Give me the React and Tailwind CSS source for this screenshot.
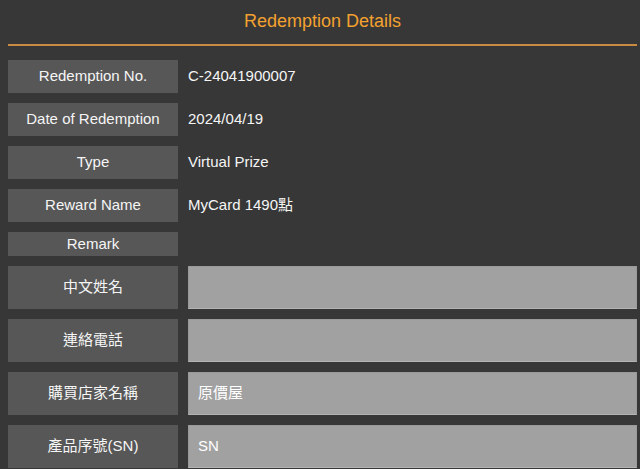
import React from 'react'

const infoRows = [
  { label: 'Redemption No.', value: 'C-24041900007' },
  { label: 'Date of Redemption', value: '2024/04/19' },
  { label: 'Type', value: 'Virtual Prize' },
  { label: 'Reward Name', value: 'MyCard 1490點' },
]

const fieldRows = [
  { label: '中文姓名', value: '' },
  { label: '連絡電話', value: '' },
  { label: '購買店家名稱', value: '原價屋' },
  { label: '產品序號(SN)', value: 'SN' },
]

const App = () => {
  return (
    <div
      className="min-h-[469px] bg-[#373737] text-[#f5f5f5] overflow-hidden"
      style={{ fontFamily: '"Liberation Sans", Arial, "Noto Sans CJK TC", sans-serif' }}
    >
      {/* Header */}
      <div className="pl-2 pr-[3px]">
        <h2 className="h-[44px] pt-[9px] text-center text-[18px] leading-[24px] text-[#f3a12f]">
          Redemption Details
        </h2>
        <div className="h-[2px] bg-[#c98a42]" />
      </div>

      {/* Details */}
      <div className="pl-2 pr-[3px] pt-[14px] flex flex-col gap-[10px]">
        {infoRows.map((row) => (
          <div key={row.label} className="flex items-stretch h-[33px]">
            <div className="w-[170px] shrink-0 bg-[#575757] flex items-center justify-center text-[15px]">
              {row.label}
            </div>
            <div className="pl-[10px] flex items-center text-[15px]">{row.value}</div>
          </div>
        ))}

        <div className="flex items-stretch h-[24px]">
          <div className="w-[170px] shrink-0 bg-[#575757] flex items-center justify-center text-[15px]">
            Remark
          </div>
        </div>

        {fieldRows.map((row) => (
          <div key={row.label} className="flex items-stretch gap-[10px] h-[43px]">
            <div className="w-[170px] shrink-0 bg-[#575757] flex items-center justify-center text-[15px]">
              {row.label}
            </div>
            <div className="flex-1 bg-[#a1a1a1] border border-[#9a9a9a] border-b-[#b4b4b4] flex items-center pl-[9px] text-[15px] text-white">
              {row.value}
            </div>
          </div>
        ))}
      </div>
    </div>
  )
}

export default App
